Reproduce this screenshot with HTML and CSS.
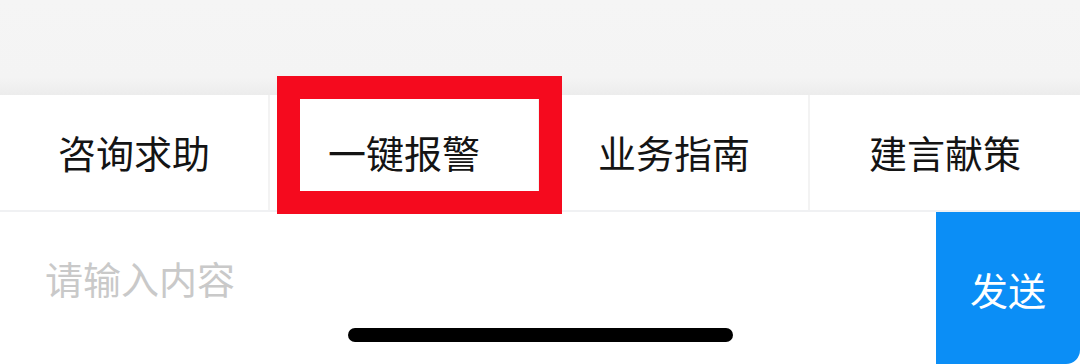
FILE: index.html
```html
<!DOCTYPE html>
<html lang="zh-CN">
<head>
<meta charset="utf-8">
<link rel="stylesheet" href="styles.css">
</head>
<body>
<div class="screen">
  <div class="top"></div>
  <div class="tabs">
    <div class="tab">咨询求助</div>
    <div class="tab">一键报警</div>
    <div class="tab">业务指南</div>
    <div class="tab">建言献策</div>
  </div>
  <div class="input-row">
    <div class="input">请输入内容</div>
    <div class="send">发送</div>
  </div>
  <div class="highlight"></div>
  <div class="home-bar"></div>
</div>
</body>
</html>
```
FILE: styles.css
```css
html, body {
  margin: 0;
  padding: 0;
  background: #ffffff;
}
.screen {
  position: relative;
  width: 1080px;
  height: 364px;
  overflow: hidden;
  font-family: "Noto Sans CJK SC", "Noto Sans", sans-serif;
  display: flex;
  flex-direction: column;
}
.top {
  height: 95px;
  flex: none;
  background: linear-gradient(to bottom, #f5f5f5 0%, #f4f4f4 82%, #ececec 100%);
}
.tabs {
  height: 115px;
  flex: none;
  display: grid;
  grid-template-columns: repeat(4, 1fr);
  border-bottom: 2px solid #f0f1f3;
  background: #fff;
}
.tab {
  display: flex;
  align-items: center;
  justify-content: center;
  padding-bottom: 3px;
  font-size: 38px;
  color: #141414;
  border-right: 2px solid #f3f3f3;
}
.tab:last-child {
  border-right: none;
}
.input-row {
  flex: 1;
  display: flex;
  background: #fff;
}
.input {
  flex: 1;
  padding-left: 45px;
  padding-top: 41px;
  font-size: 38px;
  line-height: 50px;
  color: #c9c9c9;
}
.send {
  width: 144px;
  flex: none;
  display: flex;
  align-items: center;
  justify-content: center;
  background: #0b8ef6;
  color: #ffffff;
  font-size: 38px;
  border-bottom-right-radius: 14px;
}
.highlight {
  position: absolute;
  left: 277px;
  top: 76px;
  width: 239px;
  height: 92px;
  border: 23px solid #f50a1e;
}
.home-bar {
  position: absolute;
  left: 348px;
  top: 328px;
  width: 385px;
  height: 14px;
  border-radius: 7px;
  background: #000;
}
```
